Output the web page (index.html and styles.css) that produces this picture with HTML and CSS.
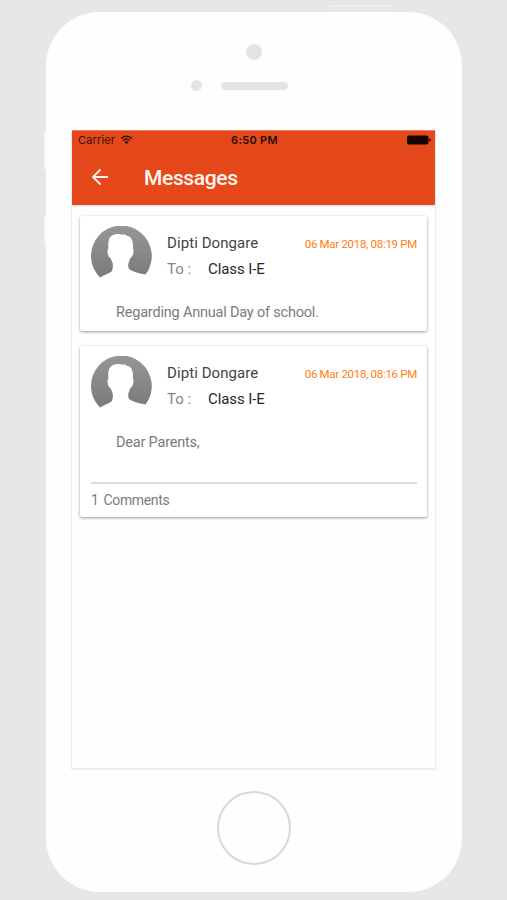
FILE: index.html
```html
<!DOCTYPE html>
<html lang="en">
<head>
<meta charset="utf-8">
<title>Messages</title>
<link rel="stylesheet" href="styles.css">
</head>
<body>
<svg class="defs" width="0" height="0" aria-hidden="true">
  <defs>
    <linearGradient id="shade" x1="0" y1="0" x2="0" y2="1"><stop offset="0" stop-color="#969696"/><stop offset="1" stop-color="#7b7b7b"/></linearGradient>
    <symbol id="avatar" viewBox="0 0 62 54">
      <path fill="url(#shade)" d="M9 51.600A30.400 30.400 0 1 1 54.500 48.500C49 47.500 43.500 46.500 39.500 44C37 42.500 36.800 39.500 37.500 37L39.300 32C41.500 31 42.900 27 42.500 23.500L41.800 22.800C42.300 18.500 42 14 39 11C37.500 9.500 35 10 33.500 8.300L31.500 8.800C29 7.800 26 8 23.500 8.500C20 9.500 17.800 12 17.500 15.500C17 18 17.500 20.500 17.200 23.200L16.500 24C16.400 27.500 17.300 31 19.500 32L21.600 37C22.200 40 22 43 20.500 45.500C17 48 12.500 49.200 9 51.600Z"/>
    </symbol>
  </defs>
</svg>
<div class="phone">
  <i class="power"></i>
  <i class="side-button mute"></i>
  <i class="side-button volume"></i>
  <div class="earpiece">
    <i class="camera"></i>
    <div class="speaker-row"><i class="sensor"></i><i class="speaker"></i></div>
  </div>
  <main class="screen">
    <header class="app-bar">
      <div class="status">
        <span class="carrier">Carrier
          <svg class="wifi" width="13" height="10" viewBox="0 0 13 10"><path d="M1 3.500Q6.500-1 12 3.500M3 5.500Q6.500 2.700 10 5.500" fill="none" stroke="#35140a" stroke-width="1.500"/><path d="M4.400 6.900Q6.500 5.300 8.600 6.900L6.500 9.200Z" fill="#35140a"/></svg>
        </span>
        <span class="time">6:50 PM</span>
        <svg class="battery" width="25" height="10" viewBox="0 0 25 10"><rect x="1" y=".5" width="21.500" height="9" rx="2" fill="#160500"/><path d="M23.300 3.200Q24.900 3.700 24.900 5T23.300 6.800Z" fill="#160500"/></svg>
      </div>
      <div class="toolbar">
        <svg class="back" width="18" height="18" viewBox="0 0 18 18"><path d="M17 9H2.200M9.500 1.500L2 9L9.500 16.500" fill="none" stroke="#fff2ec" stroke-width="1.800"/></svg>
        <h1>Messages</h1>
      </div>
    </header>
    <section class="list">
      <article class="card">
        <div class="head">
          <svg class="avatar" width="62" height="54"><use href="#avatar"/></svg>
          <div class="meta">
            <div class="line"><span class="name">Dipti Dongare</span><time>06 Mar 2018, 08:19 PM</time></div>
            <div class="line"><span class="to">To :</span><span class="class-name">Class I-E</span></div>
          </div>
        </div>
        <p class="body">Regarding Annual Day of school.</p>
      </article>
      <article class="card with-comments">
        <div class="head">
          <svg class="avatar" width="62" height="54"><use href="#avatar"/></svg>
          <div class="meta">
            <div class="line"><span class="name">Dipti Dongare</span><time>06 Mar 2018, 08:16 PM</time></div>
            <div class="line"><span class="to">To :</span><span class="class-name">Class I-E</span></div>
          </div>
        </div>
        <p class="body">Dear Parents,</p>
        <footer><span>1</span><span>Comments</span></footer>
      </article>
    </section>
  </main>
  <div class="home"></div>
</div>
</body>
</html>
```

FILE: styles.css
```css
* { box-sizing: border-box; }
body {
  margin: 0;
  height: 900px;
  padding-top: 12px;
  overflow: hidden;
  background: #e7e7e7;
  font-family: Roboto, sans-serif;
}
.defs { position: absolute; }
.phone {
  position: relative;
  width: 416px;
  height: 880px;
  margin-left: 46px;
  background: #fefefe;
  border-radius: 54px;
  display: flex;
  flex-direction: column;
}
.power {
  position: absolute;
  left: 281px;
  top: -8px;
  width: 68px;
  height: 8px;
  background: #ebe7e7;
  border: 1px solid #dcdfdf;
  border-bottom: 0;
  border-radius: 4px 4px 0 0;
  box-shadow: inset 0 1px #f7f3f3;
}
.side-button { position: absolute; left: -2px; width: 2px; background: #f5f5f5; }
.mute { top: 119px; height: 39px; }
.volume { top: 204px; height: 30px; }
.earpiece {
  height: 118px;
  padding-top: 32px;
  display: flex;
  flex-direction: column;
  align-items: center;
}
.camera { width: 16px; height: 16px; border-radius: 50%; background: #e4e4e4; }
.speaker-row {
  width: 416px;
  display: flex;
  align-items: center;
  gap: 19px;
  margin-top: 20px;
  padding-left: 145px;
}
.sensor { width: 11px; height: 11px; border-radius: 50%; background: #e4e4e4; }
.speaker { width: 67px; height: 8px; border-radius: 4px; background: #e4e4e4; }
.screen {
  width: 365px;
  height: 640px;
  margin-left: 25px;
  border: 1px solid #eee;
  border-top: 0;
  border-bottom: 2px solid #ededed;
  background: #fefefe;
}
.app-bar { height: 75px; background: #e5491b; box-shadow: 0 1px 2px #ddd; border-top: 1px solid #e98263; }
.status {
  display: grid;
  grid-template-columns: 1fr auto 1fr;
  align-items: center;
  height: 18px;
  padding: 0 4px 0 6px;
  font: 11px/18px Inter, sans-serif;
  color: #35140a;
}
.carrier { display: flex; align-items: center; gap: 5px; letter-spacing: .15px; }
.time { font-weight: 600; color: #250b03; letter-spacing: .3px; }
.battery { justify-self: end; }
.toolbar { display: flex; align-items: center; height: 56px; padding-left: 19px; }
.back { flex: none; }
h1 { margin: 1px 0 0 35px; font-size: 21px; font-weight: 500; line-height: 26px; color: #fff5ef; letter-spacing: -.35px; }
.list { display: grid; gap: 15px; padding: 11px 8px 0; }
.card {
  height: 115px;
  padding: 10px 10px 0;
  background: #fff;
  border-radius: 2px;
  box-shadow: 0 1px 3px rgba(0, 0, 0, .4);
}
.with-comments { height: 171px; }
.head { display: flex; gap: 14px; height: 66px; padding-left: 1px; }
.avatar { flex: none; }
.meta { flex: 1; padding-top: 4px; }
.line { display: flex; align-items: center; height: 26px; font-size: 15px; white-space: nowrap; }
.name { color: #444; letter-spacing: .08px; }
time { margin-left: auto; padding-top: 2px; font-size: 11.500px; color: #ff7d12; letter-spacing: -.3px; }
.to { width: 41px; color: #858585; }
.class-name { color: #282828; letter-spacing: -.1px; }
.body { margin: 11px 0 0 26px; font-size: 14.500px; line-height: 20px; color: #7b7b7b; letter-spacing: -.2px; }
footer {
  display: flex;
  gap: 5px;
  margin: 29px 0 0 1px;
  padding-top: 8px;
  border-top: 2px solid #ddd;
  font-size: 14px;
  line-height: 16px;
  letter-spacing: -.35px;
  color: #7b7b7b;
}
.home { width: 74px; height: 74px; margin: 21px 0 0 171px; border: 2px solid #d8d8d8; border-radius: 50%; }
```
